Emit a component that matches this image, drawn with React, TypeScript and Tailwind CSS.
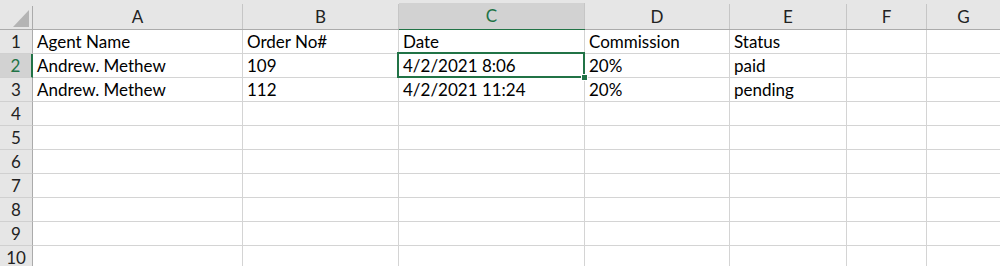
import React from 'react';

const cols = ['A', 'B', 'C', 'D', 'E', 'F', 'G'];
const widths = ['w-[210px]', 'w-[156px]', 'w-[186px]', 'w-[145px]', 'w-[117px]', 'w-[80px]', 'flex-1'];

const data: string[][] = [
  ['Agent Name', 'Order No#', 'Date', 'Commission', 'Status', '', ''],
  ['Andrew. Methew', '109', '4/2/2021 8:06', '20%', 'paid', '', ''],
  ['Andrew. Methew', '112', '4/2/2021 11:24', '20%', 'pending', '', ''],
];

const font = { fontFamily: 'Lato, "Liberation Sans", sans-serif' };

export default function App() {
  const rows = Array.from({ length: 10 }, (_, i) => i + 1);

  return (
    <div className="w-[1000px] h-[266px] overflow-hidden bg-white text-[#000]" style={font}>
      {/* Column headers */}
      <div className="flex h-[30px] bg-[#e6e6e6] border-b border-[#ababab]">
        <div className="w-[33px] shrink-0 flex flex-col">
          <div className="h-[6px]" />
          <div className="flex-1 border-r border-[#ababab] flex items-end justify-end pr-[3px] pb-[2px]">
            <svg width="16" height="17" viewBox="0 0 16 17">
              <polygon points="16,0 16,17 0,17" fill="#b4b4b4" />
            </svg>
          </div>
        </div>
        {cols.map((c, i) => (
          <div
            key={c}
            className={`${widths[i]} shrink-0 flex flex-col ${c === 'C' ? 'bg-[#d2d2d2]' : ''}`}
          >
            <div className="h-[6px] bg-[#e6e6e6]" />
            <div
              className={`flex-1 flex items-center justify-center text-[17px] ${
                c === 'C' ? 'text-[#217346]' : 'text-[#222]'
              } ${i < cols.length - 1 ? 'border-r border-[#c6c6c6]' : ''}`}
            >
              {c}
            </div>
            {c === 'C' && <div className="h-[2px] -mb-[1px] bg-[#217346]" />}
          </div>
        ))}
      </div>

      {/* Rows */}
      {rows.map((r) => {
        const sel = r === 2;
        const vals = data[r - 1] || [];
        return (
          <div key={r} className="flex h-[24px]">
            <div
              className={`w-[33px] shrink-0 flex items-center justify-center text-[17px] border-b border-[#d0d0d0] ${
                sel
                  ? 'bg-[#d2d2d2] text-[#217346] border-r-2 border-r-[#217346]'
                  : 'bg-[#e6e6e6] text-[#222] border-r border-r-[#ababab]'
              }`}
            >
              {r}
            </div>
            {cols.map((c, i) => {
              const active = sel && c === 'C';
              return (
                <div
                  key={c}
                  className={`${widths[i]} shrink-0 relative border-b border-[#d4d4d4] ${
                    i < cols.length - 1 ? 'border-r border-r-[#d4d4d4]' : ''
                  } flex items-end pl-[4px] pb-[1px] text-[17px] leading-[20px] whitespace-nowrap`}
                >
                  {vals[i] || ''}
                  {active && (
                    <>
                      <div className="absolute z-10 left-[-2px] top-[-2px] right-[-1px] bottom-[-1px] border-[2px] border-solid border-[#217346]" />
                      <div className="absolute z-20 right-[-4px] bottom-[-4px] w-[7px] h-[7px] bg-[#217346] border border-solid border-white" />
                    </>
                  )}
                </div>
              );
            })}
          </div>
        );
      })}
    </div>
  );
}
